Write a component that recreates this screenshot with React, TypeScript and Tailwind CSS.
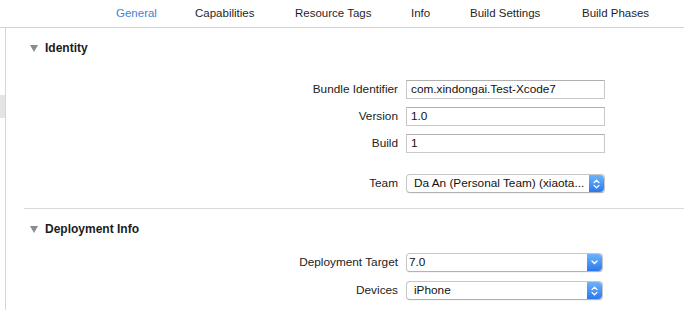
import React from 'react';

// Tab labels with the width each one takes in the bar
const tabs = [
  { label: 'General', w: 'w-[79px]', active: true },
  { label: 'Capabilities', w: 'w-[100px]' },
  { label: 'Resource Tags', w: 'w-[116px]' },
  { label: 'Info', w: 'w-[59px]' },
  { label: 'Build Settings', w: 'w-[112px]' },
  { label: 'Build Phases', w: 'w-[90px]' },
];

const font = { fontFamily: '"Liberation Sans", Arial, sans-serif' };

const SectionHeader: React.FC<{ title: string }> = ({ title }) => (
  <div className="flex items-center h-[18px] pl-[24px]">
    <span className="w-0 h-0 border-l-[4px] border-r-[4px] border-t-[7px] border-l-transparent border-r-transparent border-t-[#8c8c8c]" />
    <span className="ml-[7px] text-[12px] font-bold text-[#1c1c1c]">{title}</span>
  </div>
);

const Label: React.FC<{ children: React.ReactNode }> = ({ children }) => (
  <div className="w-[392px] text-right text-[11.8px] text-[#222]">{children}</div>
);

const TextField: React.FC<{ label: string; value: string }> = ({ label, value }) => (
  <div className="flex items-center h-[19px]">
    <Label>{label}</Label>
    <div className="ml-[8px] w-[199px] h-[19px] border border-[#c9c9c9] border-t-[#b0b0b0] bg-white flex items-center pl-[4px] text-[11.8px] text-[#111]">
      {value}
    </div>
  </div>
);

const Stepper: React.FC<{ single?: boolean }> = ({ single }) => (
  <div className="w-[15px] h-full rounded-r-[4px] bg-gradient-to-b from-[#6db3fa] to-[#2a78ee] flex items-center justify-center">
    {single ? (
      <svg width="7" height="5" viewBox="0 0 7 5">
        <path d="M1 1 L3.5 3.5 L6 1" stroke="white" strokeWidth="1.4" fill="none" strokeLinecap="round" />
      </svg>
    ) : (
      <svg width="7" height="10" viewBox="0 0 7 10">
        <path d="M1 3.6 L3.5 1.2 L6 3.6" stroke="white" strokeWidth="1.3" fill="none" strokeLinecap="round" />
        <path d="M1 6.4 L3.5 8.8 L6 6.4" stroke="white" strokeWidth="1.3" fill="none" strokeLinecap="round" />
      </svg>
    )}
  </div>
);

const PopUp: React.FC<{ label: string; value: string; w: string; pl: string; single?: boolean }> = ({
  label,
  value,
  w,
  pl,
  single,
}) => (
  <div className="flex items-center h-[19px]">
    <Label>{label}</Label>
    <div
      className={`ml-[8px] ${w} h-[19px] rounded-[4px] border border-[#c6c6c6] border-b-[#b2b2b2] bg-white flex items-center shadow-[0_0.5px_0.5px_rgba(0,0,0,0.08)]`}
    >
      <div className={`flex-1 ${pl} text-[11.8px] text-[#111] whitespace-nowrap overflow-hidden`}>{value}</div>
      <Stepper single={single} />
    </div>
  </div>
);

export default function App() {
  return (
    <div className="w-[684px] h-[310px] bg-white overflow-hidden flex flex-col" style={font}>
      {/* Tab bar */}
      <div className="h-[28px] shrink-0 flex items-center pl-[116px] border-b border-[#d2d2d2] bg-white">
        {tabs.map((t) => (
          <span
            key={t.label}
            className={`${t.w} text-[11.5px] whitespace-nowrap ${t.active ? 'text-[#3d82d6]' : 'text-[#1f1f1f]'}`}
          >
            {t.label}
          </span>
        ))}
      </div>

      <div className="flex flex-1">
        {/* Left gutter */}
        <div className="w-[6px] shrink-0 border-r border-[#d6d6d6] flex flex-col">
          <div className="h-[67px]" />
          <div className="w-[5px] h-[23px] bg-[#e4e4e4]" />
        </div>

        {/* Editor content */}
        <div className="flex-1 flex flex-col pt-[11px]">
          <SectionHeader title="Identity" />

          <div className="flex flex-col gap-[8px] mt-[23px]">
            <TextField label="Bundle Identifier" value="com.xindongai.Test-Xcode7" />
            <TextField label="Version" value="1.0" />
            <TextField label="Build" value="1" />
          </div>

          <div className="mt-[21px]">
            <PopUp label="Team" value="Da An (Personal Team) (xiaota..." w="w-[199px]" pl="pl-[7px]" />
          </div>

          <div className="mt-[15px] ml-[18px] h-px bg-[#d9d9d9]" />

          <div className="mt-[11px]">
            <SectionHeader title="Deployment Info" />
          </div>

          <div className="flex flex-col gap-[9px] mt-[15px]">
            <PopUp label="Deployment Target" value="7.0" w="w-[197px]" pl="pl-[2px]" single />
            <PopUp label="Devices" value="iPhone" w="w-[197px]" pl="pl-[7px]" />
          </div>
        </div>
      </div>
    </div>
  );
}
